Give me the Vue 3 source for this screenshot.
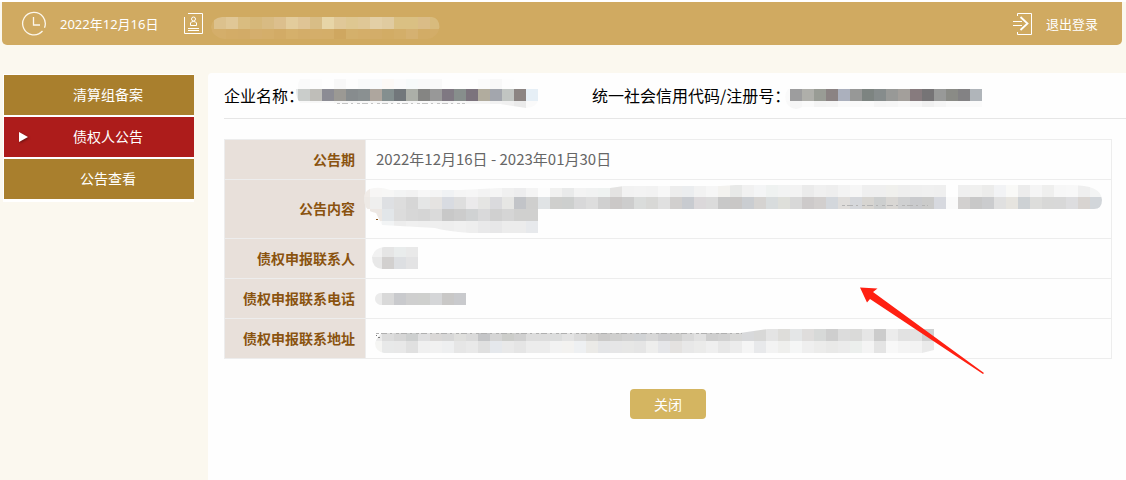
<script setup>
import { h, ref } from 'vue'

const active = ref(1)
const menu = ['清算组备案', '债权人公告', '公告查看']

const cell = 12

// Draws rows of square tiles; colours are hex without "#", and "-" leaves a gap.
const Mosaic = (props) => {
  const [x, y, w, hh] = props.box
  const tiles = props.rows.flatMap((row) =>
    row.colors.split(' ').map((c, i) =>
      c === '-' ? null : h('rect', { x: row.x + i * cell, y: row.y, width: cell, height: row.h || cell, fill: '#' + c })
    )
  )
  const marks = (props.marks || []).map((m) =>
    h('path', { d: m.d, fill: 'none', stroke: m.color || '#bbb', 'stroke-width': 1, 'stroke-dasharray': m.dash || '3 2 6 3 2 4' })
  )
  return h('svg', { width: w, height: hh, viewBox: `${x} ${y} ${w} ${hh}`, 'shape-rendering': 'crispEdges', 'aria-hidden': 'true' }, [
    h('defs', [h('clipPath', { id: props.id }, [h('path', { d: props.shape })])]),
    h('g', { 'clip-path': `url(#${props.id})` }, tiles),
    ...marks
  ])
}
Mosaic.props = ['id', 'box', 'rows', 'shape', 'marks']

const user = {
  id: 'm-user',
  box: [210, 16, 232, 24],
  shape: 'M222 17H432Q439 18 439.500 27Q438 37 428 39H224Q212 37 211 27Q212 18 222 17Z',
  rows: [
    { x: 202, y: 17, colors: 'd4b06b dcc18d e0c796 d9bc80 d6b87a d8bb83 dcbf8d e3cc9c dfc495 d8bd86 e7d5a7 e0c898 dec791 dfc796 e3cfa6 e0cba0 dac083 dac083 dabc87 d8bb7d' },
    { x: 202, y: 29, colors: 'd4ae6a d4ae6a d3ac67 d2ab67 d4ae6d d4ae6a d2ab66 d5b06b d3ad69 d4ae6a d4ae69 cfa760 d4b06b d4ae69 d3ad69 d2ac65 d3ae69 d5b171 d2ac66 d3ad68' }
  ]
}

const company = {
  id: 'm-company',
  box: [294, 78, 250, 32],
  shape: 'M300 79H538V101Q536 107 526 108L500 104L300 103Q296 98 296 89Z',
  rows: [
    { x: 298, y: 79, h: 10, colors: 'fafafa fcfcfc - f8f8f8 fdfdfd f9fafa f9fafb fcf9f6 fbfbfb f7fafa f9f9f9 f9f9f9 - - - fbfbfb f8f8f8 fdfdfd' },
    { x: 286, y: 89, colors: 'e7eaea cacdcb bfbeb9 8c8c94 9b9994 878c8e 8a9091 aea69e 848f8f 72777b acafa8 858583 989898 7f7882 878e8c 7c737d b1ac9e a3a6ad c1c5c2 8b8482 e6eff6' },
    { x: 298, y: 101, colors: 'f8f8f8 f7f7f7 fafafa f5f5f5 f5f5f5 f7f7f7 f5f5f5 f3f3f3 f8f8f8 f5f5f5 f9f9f9 f5f5f5 f4f4f4 f8f8f8 f5f5f5 f5f5f5 f2f2f2 f0f0f0 eaeaea fafafa' }
  ],
  marks: [{ d: 'M337 103.500H465', color: '#c4c4c4' }]
}

const code = {
  id: 'm-code',
  box: [784, 86, 200, 24],
  shape: 'M788 89H982V107H802Q794 112 787 104Q783 96 788 89Z',
  rows: [
    { x: 778, y: 89, colors: 'fafafa 9d9d9e afafaa 999c95 8b8383 abb0bd 979897 7d8481 868c8c 989997 a39f9b 877b7e 767476 989998 8a8b86 838284 b0b5ba' },
    { x: 778, y: 101, colors: 'f9f9f9 f6f6f6 fafafa f4f4f4 f5f5f5 fafafa f9f9f9 fafafa f5f5f5 f6f6f6 f9f9f9 f6f6f6 f0f0f0 f5f5f5 f9f9f9 f9f9f9 fafafa' }
  ]
}

const content = {
  id: 'm-content',
  box: [362, 183, 744, 52],
  shape: 'M364 199Q364 189 374 188Q382 187 390 190L460 190L500 188L610 188L624 186L720 186L736 185L1070 185Q1102 185 1102 200Q1102 209 1094 209H538V233H470Q445 231 435 228L382 225L376 213Q364 211 364 199Z',
  rows: [
    { x: 358, y: 185, colors: 'f1ece8 f7f6f5 f7f7f6 f3f4f4 f2f2f2 f7f7f7 f5f5f5 f0f2f4 f5f5f5 f6f6f6 f3f3f3 f5f5f5 f0f0f0 ededee f4f4f4 fcfcfc f1f1f0 e9eaea f3f3f3 f1f2f2 eff2f1 e4e3e2 f2f2f2 f3f3f3 f2f2f2 f7f7f7 ededed ebedef f2f2f2 f6f6f6 f3f2ef e8e9e8 f1f1f1 f4f5f6 eff2f1 f2f3f3 f3f3f3 ebebeb f0f0f0 eeeeee f3f3f3 f6f6f6 efefef efefef f0f0ed eeeeee efefef f0f0f0 efefef - efefef f0f0ef ececeb f2f3f5 f9f9f7 ececec f5f5f5 efefee f7f7f7 f8f8f8 efefef f3f4f4' },
    { x: 358, y: 197, colors: 'eeeae6 efefee dee0e3 dddddd d6d6d6 e5e6e6 e5e3e1 d8dbe1 dedede ebeaeb e5e5e3 dadadd e6e6e4 c2c4c8 cfcfce e0e3e5 cfcfcd cdcfce d8d8d9 dddddd d0d0d0 cbc8c7 cdcdcd dadcdb d8d8d6 e0e0e0 d1cfce c8cbd0 dbd8da dbdbdb c8c8c8 c9c7c6 cacdd1 d5d3d1 d8dcdd dedfda d8d8d8 cdcaca d2cfce d3d7dc dfdddb d5d7db d7d5d1 cdcfcf d9d7d4 cfd0d1 c9cacd cbcbca d7d9df fafafa d2d0cf c8c8c8 cbccce e0e0e0 e6e4df cdd1d4 dddddb d8d8d7 d8d8d8 dddddf d8d4d1 d2d6da' },
    { x: 370, y: 209, colors: 'ede8e4 e2e6e9 dcdcdc d7d7d7 d5d5d5 dadada c8c8c8 cccccc d0d2d3 d9d9da d0d0d0 d5d5d5 d0d0cf d0d0cf e8eaee' },
    { x: 370, y: 221, colors: 'f9f9f9 f2f4f5 ededed f0f0f0 efefef efefef eeeeee f0f0f0 eeeeee e9e9ea e7e7e8 ececec ececec e7e9ec e8eaec' }
  ],
  marks: [
    { d: 'M842 205.500H928', color: '#b4b4b4' },
    { d: 'M376 219.500h2', color: '#875218', dash: 'none' }
  ]
}

const contact = {
  id: 'm-contact',
  box: [370, 245, 50, 26],
  shape: 'M384 247H418V269H382Q372 268 372 257Q374 248 384 247Z',
  rows: [
    { x: 370, y: 245, colors: 'f1f1f1 e5e5e5 e9ecec e9e9e9' },
    { x: 370, y: 257, colors: 'e8e8e8 d2d0cf dddfe2 e3e3e4' }
  ]
}

const phone = {
  id: 'm-phone',
  box: [374, 291, 94, 16],
  shape: 'M380 293H466V305H380Q375 303 375 299Q375 294 380 293Z',
  rows: [{ x: 370, y: 293, colors: 'ebebeb d9d9d9 c9cacd cfcfcf cfd0ce d5d6d8 c9c8c7 c9cacd' }]
}

const address = {
  id: 'm-address',
  box: [374, 327, 562, 30],
  shape: 'M382 333H740L768 329H934V350L922 353H384Q375 351 375 343Q377 337 382 333Z',
  rows: [
    { x: 370, y: 329, colors: 'ebebeb dcdcdc d6d6d6 cdcfcf dfdfe0 dad8d7 d7d7d7 dfdfdd dadada c4c5c7 d5d5d5 cccdca d0d0d0 dddddd dddddd dcdddd e3e3e3 dbdbdb d4d3d1 cbcac9 cfcfce d3d3d3 d1d3d5 d7d7d7 ceced0 cfcfce d9d9d9 e1e1e1 cecece d1d1d1 d8d8d7 d8d9db d8d8d7 e4e4e4 deddda e4e6e7 dfdddc d7d9d8 cecece dcdcdc dadad9 e6e6e6 cccccc ececec e2e2e2 e3e3e3 d0d0d0' },
    { x: 370, y: 341, colors: 'f5f5f3 e8e9e9 e8e8e8 e0e0e0 f0f0f0 f1f1f1 eeeff0 e6e6e6 e9e9e9 e0e0e0 e5e8ec e9e9e9 e5e5e5 ececec ececec f2f2f2 f3f2f0 eef0f2 ebeae7 e4e5e7 e6e6e7 e7e7e6 e5e5e5 eeeeed e5e6e9 e4e2e0 e8e8e8 ebebea efefef e7e7e7 ececec f5f5f5 e8e9eb f3f3f3 efefed f5f6f6 efefef ececeb e9e9e8 ebebeb ecefed f4f4f4 e4e4e4 f8f8f8 f4f4f4 f3f3f3 eaeaea' }
  ],
  marks: [
    { d: 'M376 333.500H742', color: '#b0b0b0' },
    { d: 'M376 335.500h1M378 337.500h2', color: '#777', dash: 'none' }
  ]
}

const rows = [
  { label: '公告期', text: '2022年12月16日 - 2023年01月30日' },
  { label: '公告内容', mosaic: content, kind: 'content' },
  { label: '债权申报联系人', mosaic: contact, kind: 'contact' },
  { label: '债权申报联系电话', mosaic: phone, kind: 'phone' },
  { label: '债权申报联系地址', mosaic: address, kind: 'address' }
]
</script>

<template>
  <div class="page">
    <header class="topbar">
      <svg class="clock" width="26" height="26" viewBox="0 0 26 26" fill="none" stroke="#fcf7ec" aria-hidden="true">
        <path d="M21.500 20A11.300 11.300 0 1 1 23.500 16.700" stroke-width="1.300" />
        <path d="M12.500 6V14H19" stroke-width="1.300" />
      </svg>
      <time class="date" datetime="2022-12-16">2022年12月16日</time>
      <svg class="badge" width="20" height="22" viewBox="0 0 20 22" fill="none" stroke="#fff" aria-hidden="true">
        <path d="M4 .5H18.500V20.500H.5V4" />
        <circle cx="9.500" cy="6" r="2" />
        <path d="M6.500 12.500V10Q7 8.500 9.500 8.500T12.500 10V12.500ZM4 15.500H15M4 17.500H15" />
      </svg>
      <span class="user"><Mosaic v-bind="user" /></span>
      <a class="logout" href="#">
        <svg width="20" height="24" viewBox="0 0 20 24" fill="none" stroke="#fff" aria-hidden="true">
          <path d="M4.500 4V1.500H18.500V22.500H4.500V20" />
          <path d="M0 9.500H9M0 13.500H9" />
          <path d="M7.500 5L14.500 11.500L7.500 18" stroke-width="1.800" />
        </svg>
        <span>退出登录</span>
      </a>
    </header>

    <div class="body">
      <nav class="side">
        <button
          v-for="(item, i) in menu"
          :key="item"
          type="button"
          :class="['item', { active: active === i }]"
          @click="active = i"
        >{{ item }}</button>
      </nav>

      <main class="panel">
        <div class="info">
          <div class="field name">企业名称：<Mosaic class="cover" v-bind="company" /></div>
          <div class="field code">统一社会信用代码/注册号：<Mosaic class="cover" v-bind="code" /></div>
        </div>

        <table class="detail">
          <tbody>
            <tr v-for="row in rows" :key="row.label" :class="row.kind">
              <th scope="row">{{ row.label }}</th>
              <td>
                {{ row.text }}
                <Mosaic v-if="row.mosaic" class="cover" v-bind="row.mosaic" />
              </td>
            </tr>
          </tbody>
        </table>

        <div class="actions">
          <button type="button" class="close">关闭</button>
        </div>

        <svg class="arrow" width="126" height="88" viewBox="859 287 126 88" aria-hidden="true">
          <path d="M860 287.500L877.500 288.500L873 292L984 373L983 374L870 299L867 302.500Z" fill="#ff2012" />
        </svg>
      </main>
    </div>
  </div>
</template>

<style>
body {
  background: #fbf8ef;
}
</style>

<style scoped>
.page {
  box-sizing: border-box;
  min-height: 100vh;
  display: flex;
  flex-direction: column;
  padding-top: 2px;
  background: linear-gradient(#fff 2px, #fbf8ef 2px);
  font-family: "Noto Sans CJK SC", "Liberation Sans", sans-serif;
}

.topbar {
  display: flex;
  align-items: center;
  height: 43px;
  margin: 0 4px 0 2px;
  padding: 0 24px 0 19px;
  box-sizing: border-box;
  border-radius: 0 0 5px 5px;
  background: #d0aa61;
  color: #fff;
  font-family: "Noto Sans", "Noto Sans CJK SC", sans-serif;
  font-size: 13px;
  line-height: 20px;
}

.clock {
  margin-right: 13px;
}

.date {
  margin-right: 25px;
}

.badge {
  margin-right: 6px;
}

.user {
  height: 24px;
  padding-top: 8px;
}

.logout {
  display: flex;
  align-items: center;
  gap: 13px;
  margin-left: auto;
  color: inherit;
  text-decoration: none;
}

.body {
  flex: 1;
  display: flex;
  align-items: flex-start;
  padding-top: 28px;
}

.side {
  display: flex;
  flex-direction: column;
  gap: 2px;
  flex: none;
  width: 190px;
  margin: 1px 14px 0 3px;
  padding: 1px 0 3px 1px;
  background: #fff;
}

.item {
  position: relative;
  height: 40px;
  padding: 0 0 2px 18px;
  border: 0;
  background: #a97f2d;
  color: #fff;
  font: inherit;
  font-size: 14px;
  cursor: pointer;
}

.item.active {
  background: #ad1c1b;
}

.item.active::before {
  content: "";
  position: absolute;
  left: 15px;
  top: 15px;
  border: 5px solid transparent;
  border-left: 9px solid #fff;
  border-right: 0;
  filter: drop-shadow(1px 1px 1px rgba(0, 0, 0, 0.4));
}

.panel {
  position: relative;
  flex: 1;
  align-self: stretch;
  min-width: 0;
  padding-left: 16px;
  border-radius: 4px 0 0 0;
  background: #fefefe;
}

.info {
  display: flex;
  height: 45px;
  border-bottom: 1px solid #e6e6e6;
  color: #000;
  font-size: 16px;
  line-height: 44px;
}

.field {
  position: relative;
  white-space: nowrap;
}

.name {
  width: 368px;
}

.cover {
  position: absolute;
}

.name .cover {
  left: 70px;
  top: 5px;
}

.code .cover {
  left: 192px;
  top: 13px;
}

.detail {
  width: calc(100% - 14px);
  margin-top: 20px;
  border-collapse: collapse;
  font-size: 14px;
}

.detail th,
.detail td {
  height: 37px;
  padding: 0 10px 2px;
  border: 1px solid #ededed;
  box-sizing: content-box;
}

.detail th {
  width: 120px;
  background: #e8e0da;
  color: #8a530f;
  font-weight: 700;
  text-align: right;
  white-space: nowrap;
}

.detail td {
  position: relative;
  color: #666;
  font-size: 15px;
}

.detail .content th,
.detail .content td {
  height: 56px;
}

.content .cover {
  left: -4px;
  top: 3px;
}

.contact .cover {
  left: 4px;
  top: 6px;
}

.phone .cover {
  left: 8px;
  top: 12px;
}

.address .cover {
  left: 8px;
  top: 8px;
}

.actions {
  display: flex;
  justify-content: center;
  margin: 30px 14px 0 0;
}

.close {
  width: 76px;
  height: 30px;
  padding: 0;
  border: 0;
  border-radius: 4px;
  background: #d4b561;
  color: #fff;
  font: inherit;
  font-size: 14px;
  cursor: pointer;
}

.arrow {
  position: absolute;
  left: 651px;
  top: 214px;
}
</style>
